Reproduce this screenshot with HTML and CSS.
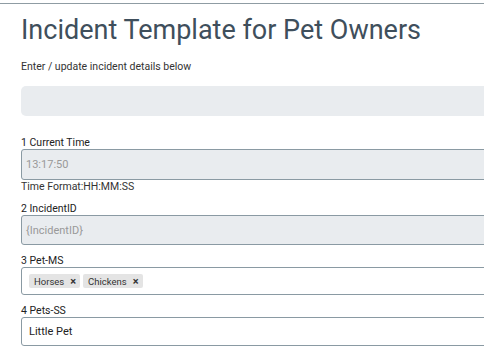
FILE: index.html
```html
<!DOCTYPE html>
<html lang="en">
<head>
    <meta charset="UTF-8">
    <meta name="viewport" content="width=device-width, initial-scale=1.0">
    <title>Incident Template for Pet Owners</title>
    <link rel="stylesheet" href="styles.css">
</head>
<body>
    <div class="page">
        <h1>Incident Template for Pet Owners</h1>
        <p class="intro">Enter / update incident details below</p>
        <div class="banner"></div>

        <div class="field first">
            <label>1 Current Time</label>
            <div class="box readonly tall">13:17:50</div>
            <div class="hint">Time Format:HH:MM:SS</div>
        </div>

        <div class="field">
            <label>2 IncidentID</label>
            <div class="box readonly">{IncidentID}</div>
        </div>

        <div class="field">
            <label>3 Pet-MS</label>
            <div class="box multi">
                <span class="tag">Horses <span class="x">×</span></span>
                <span class="tag">Chickens <span class="x">×</span></span>
            </div>
        </div>

        <div class="field">
            <label>4 Pets-SS</label>
            <div class="box select">Little Pet</div>
        </div>
    </div>
</body>
</html>
```

FILE: styles.css
```css
body {
    margin: 0;
    font-family: Roboto, "Liberation Sans", sans-serif;
    background-color: white;
    overflow: hidden;
}
.page {
    border-top: 1px solid #8f9ca3;
    margin-top: 3px;
    padding: 0 0 0 21px;
    width: 540px;
}
h1 {
    margin: 10px 0 0 0;
    font-size: 27px;
    font-weight: 400;
    color: #3f4f5c;
    line-height: 32px;
}
.intro {
    margin: 14px 0 0 0;
    font-size: 10.5px;
    color: #333;
    line-height: 13px;
}
.banner {
    margin-top: 13px;
    height: 30px;
    background-color: #e9ecef;
    border-radius: 5px;
}
.field {
    margin-top: 9px;
}
.field.first {
    margin-top: 20px;
}
label {
    display: block;
    font-size: 10.5px;
    color: #222;
    line-height: 13px;
}
.box {
    box-sizing: border-box;
    height: 30px;
    border: 1px solid #8a9aa3;
    border-radius: 3px;
    padding: 0 7px;
    display: flex;
    align-items: center;
    font-size: 11px;
    color: #222;
}
.readonly {
    background-color: #e9ecef;
    color: #999;
    padding-left: 4px;
}
.tall {
    height: 31px;
}
.hint {
    font-size: 10.5px;
    color: #333;
    line-height: 13px;
}
.multi {
    height: 28px;
    padding: 0 7px;
    align-items: flex-start;
    padding-top: 6px;
    gap: 3px;
}
.tag {
    display: inline-flex;
    align-items: center;
    height: 14px;
    padding: 0 4px 0 5px;
    background-color: #e4e4e4;
    border-radius: 2px;
    font-size: 9.5px;
    color: #333;
}
.x {
    font-size: 11px;
    font-weight: 700;
    margin-left: 6px;
}
.select {
    height: 29px;
    font-size: 11px;
}
```
